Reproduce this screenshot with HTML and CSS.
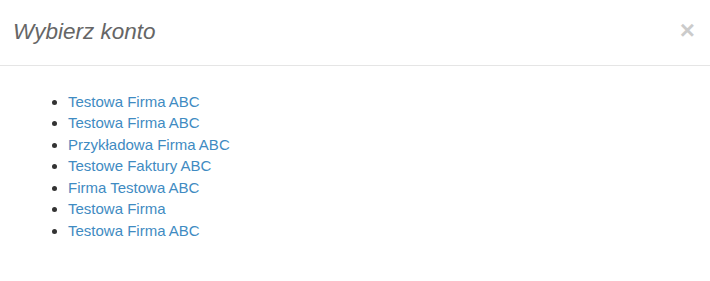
FILE: index.html
```html
<!DOCTYPE html>
<html lang="pl">

<head>
    <meta charset="UTF-8">
    <meta name="viewport" content="width=device-width, initial-scale=1.0">
    <title>Wybierz konto</title>
    <link rel="stylesheet" href="styles.css">
</head>

<body>
    <div class="modal">
        <div class="modal-header">
            <h4 class="modal-title">Wybierz konto</h4>
            <button type="button" class="close">&times;</button>
        </div>
        <div class="modal-body">
            <ul class="accounts">
                <li><a href="#">Testowa Firma ABC</a></li>
                <li><a href="#">Testowa Firma ABC</a></li>
                <li><a href="#">Przykładowa Firma ABC</a></li>
                <li><a href="#">Testowe Faktury ABC</a></li>
                <li><a href="#">Firma Testowa ABC</a></li>
                <li><a href="#">Testowa Firma</a></li>
                <li><a href="#">Testowa Firma ABC</a></li>
            </ul>
        </div>
    </div>
</body>

</html>
```

FILE: styles.css
```css
body {
    margin: 0;
    font-family: "Liberation Sans", Arial, sans-serif;
    font-size: 15px;
    line-height: 1.42857;
    color: #333;
    background-color: #fff;
}

.modal {
    width: 710px;
}

.modal-header {
    display: flex;
    align-items: flex-start;
    justify-content: space-between;
    padding: 15px 15px 16px 13px;
    border-bottom: 1px solid #e5e5e5;
}

.modal-title {
    margin: 0;
    font-size: 22.5px;
    font-weight: normal;
    font-style: italic;
    line-height: 34px;
    color: #666;
}

.close {
    margin-top: 2px;
    padding: 0;
    border: 0;
    background: transparent;
    font-family: "Liberation Sans", Arial, sans-serif;
    font-size: 26px;
    font-weight: bold;
    line-height: 1;
    color: #000;
    opacity: 0.2;
    cursor: pointer;
}

.modal-body {
    padding: 25px 15px 15px 28px;
}

.accounts {
    margin: 0;
    padding-left: 40px;
}

.accounts a {
    color: #3f8bc2;
    text-decoration: none;
}
```
